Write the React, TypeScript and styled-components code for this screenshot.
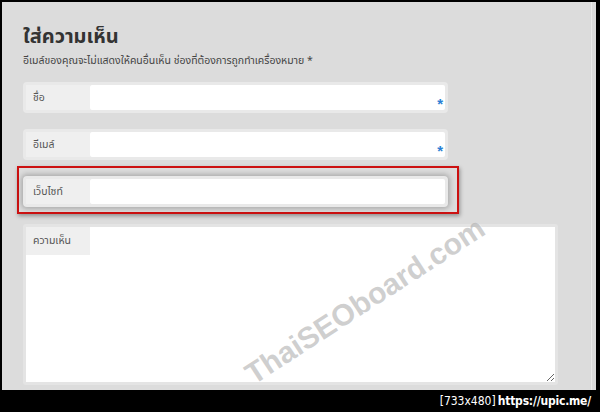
import styled, { createGlobalStyle } from 'styled-components';

const GlobalStyle = createGlobalStyle`
  html, body {
    margin: 0;
    padding: 0;
    background: #000;
  }
  * {
    box-sizing: border-box;
  }
`;

const THAI = `"Noto Sans Thai", "Noto Sans", "DejaVu Sans", sans-serif`;

const Screen = styled.div`
  width: 600px;
  height: 412px;
  background: #000;
  padding: 2px 4px 0 2px;
  display: flex;
  flex-direction: column;
  overflow: hidden;
`;

const Page = styled.div`
  position: relative;
  height: 388px;
  background: #dcdcdc;
  padding: 21px 0 0 21px;
  box-shadow: inset -4px 0 0 #dcdcdc, inset -5px 0 0 #ececec;
  overflow: hidden;
  font-family: ${THAI};
`;

const Title = styled.h3`
  margin: 0;
  font-size: 20px;
  line-height: 28px;
  font-weight: 700;
  color: #333;
`;

const Note = styled.p`
  margin: 2px 0 13px;
  font-size: 10.5px;
  line-height: 16px;
  color: #444;
`;

const Field = styled.div<{ $focus?: boolean; $gap?: number }>`
  display: flex;
  width: 425px;
  height: 31px;
  padding: 3px;
  border-radius: 4px;
  background: #e9e9e9;
  margin-bottom: ${({ $gap = 16 }) => $gap}px;
  box-shadow: ${({ $focus }) =>
    $focus ? '0 0 5px 2px rgba(0, 0, 0, 0.22)' : 'none'};
`;

const Label = styled.label`
  display: flex;
  align-items: center;
  width: 64px;
  height: 25px;
  padding-left: 7px;
  background: #efefef;
  font-size: 10.5px;
  color: #555;
`;

const InputBox = styled.div`
  flex: 1;
  display: flex;
  align-items: center;
  background: #fff;
  border-radius: 2px;
`;

const Input = styled.input`
  flex: 1;
  min-width: 0;
  height: 100%;
  border: 0;
  outline: none;
  background: transparent;
  font: 11px ${THAI};
`;

const Required = styled.span`
  padding: 11px 2px 0 0;
  font: 700 15px "Liberation Sans", sans-serif;
  color: #2a7fd4;
`;

const Highlight = styled.div`
  width: 442px;
  margin-left: -6px;
  padding: 8px 9px 5px 4px;
  border: 2px solid #cc1111;
  box-shadow: 1px 2px 4px rgba(0, 0, 0, 0.35);
  margin-bottom: 10px;
`;

const CommentField = styled.div`
  display: grid;
  width: 535px;
  height: 161px;
  border: 3px solid #e4e4e4;
  border-radius: 3px;
  background: #fff;
`;

const CommentLabel = styled(Label)`
  grid-area: 1 / 1;
  align-self: start;
  justify-self: start;
  height: 28px;
  z-index: 1;
`;

const TextArea = styled.textarea`
  grid-area: 1 / 1;
  border: 0;
  outline: none;
  resize: vertical;
  background: transparent;
  padding: 34px 8px 4px;
  font: 11px ${THAI};
`;

const Watermark = styled.div`
  position: absolute;
  left: 363px;
  top: 299px;
  transform: translate(-50%, -50%) rotate(-33deg);
  white-space: nowrap;
  font: 700 30px "Liberation Sans", Arial, sans-serif;
  color: rgba(160, 160, 160, 0.5);
  text-shadow: 1px 1px 0 rgba(255, 255, 255, 0.4);
  pointer-events: none;
`;

const Footer = styled.div`
  flex: 1;
  display: flex;
  align-items: center;
  justify-content: flex-end;
  gap: 2px;
  padding-right: 5px;
  color: #fff;
  font-size: 12px;
`;

const Size = styled.span`
  font-family: "DejaVu Sans Condensed", "DejaVu Sans", sans-serif;
  font-weight: 300;
`;

const Url = styled.span`
  font-family: "DejaVu Sans Condensed", "DejaVu Sans", sans-serif;
  font-weight: 700;
  letter-spacing: -0.2px;
`;

export default function App() {
  return (
    <>
      <GlobalStyle />
      <Screen>
        <Page>
          <Title>ใส่ความเห็น</Title>
          <Note>อีเมล์ของคุณจะไม่แสดงให้คนอื่นเห็น ช่องที่ต้องการถูกทำเครื่องหมาย *</Note>

          <Field>
            <Label>ชื่อ</Label>
            <InputBox>
              <Input />
              <Required>*</Required>
            </InputBox>
          </Field>

          <Field $gap={6}>
            <Label>อีเมล์</Label>
            <InputBox>
              <Input />
              <Required>*</Required>
            </InputBox>
          </Field>

          <Highlight>
            <Field $focus $gap={0}>
              <Label>เว็บไซท์</Label>
              <InputBox>
                <Input />
              </InputBox>
            </Field>
          </Highlight>

          <CommentField>
            <CommentLabel>ความเห็น</CommentLabel>
            <TextArea />
          </CommentField>

          <Watermark>ThaiSEOboard.com</Watermark>
        </Page>
        <Footer>
          <Size>[733x480]</Size>
          <Url>https://upic.me/</Url>
        </Footer>
      </Screen>
    </>
  );
}
